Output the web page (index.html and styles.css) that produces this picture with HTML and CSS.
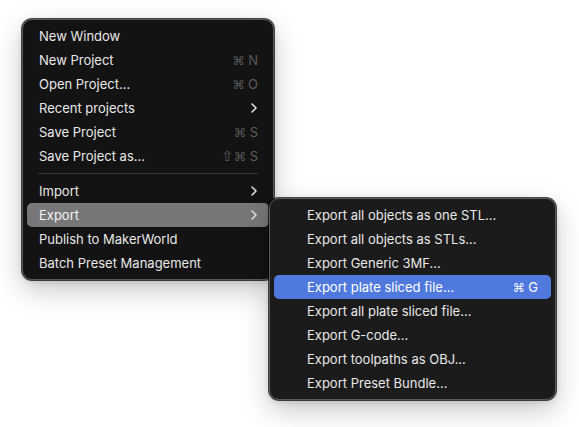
FILE: index.html
```html
<!DOCTYPE html>
<html>
<head>
<meta charset="utf-8">
<link rel="stylesheet" href="styles.css">
</head>
<body>
<div class="stage">
  <div class="menu main">
    <div class="row"><span class="label">New Window</span></div>
    <div class="row"><span class="label">New Project</span><span class="key"><span class="g">⌘</span> N</span></div>
    <div class="row"><span class="label">Open Project...</span><span class="key"><span class="g">⌘</span> O</span></div>
    <div class="row"><span class="label">Recent projects</span><svg class="chev" width="6" height="10" viewBox="0 0 6 10"><path d="M1 1 L5 5 L1 9" fill="none" stroke="currentColor" stroke-width="1.6" stroke-linecap="round" stroke-linejoin="round"/></svg></div>
    <div class="row"><span class="label">Save Project</span><span class="key"><span class="g">⌘</span> S</span></div>
    <div class="row"><span class="label">Save Project as...</span><span class="key"><span class="g shift">⇧</span><span class="g">⌘</span> S</span></div>
    <div class="sep"></div>
    <div class="row"><span class="label">Import</span><svg class="chev" width="6" height="10" viewBox="0 0 6 10"><path d="M1 1 L5 5 L1 9" fill="none" stroke="currentColor" stroke-width="1.6" stroke-linecap="round" stroke-linejoin="round"/></svg></div>
    <div class="row open"><span class="label">Export</span><svg class="chev" width="6" height="10" viewBox="0 0 6 10"><path d="M1 1 L5 5 L1 9" fill="none" stroke="currentColor" stroke-width="1.6" stroke-linecap="round" stroke-linejoin="round"/></svg></div>
    <div class="row"><span class="label">Publish to MakerWorld</span></div>
    <div class="row"><span class="label">Batch Preset Management</span></div>
  </div>
  <div class="menu sub">
    <div class="row"><span class="label">Export all objects as one STL...</span></div>
    <div class="row"><span class="label">Export all objects as STLs...</span></div>
    <div class="row"><span class="label">Export Generic 3MF...</span></div>
    <div class="row active"><span class="label">Export plate sliced file...</span><span class="key"><span class="g">⌘</span> G</span></div>
    <div class="row"><span class="label">Export all plate sliced file...</span></div>
    <div class="row"><span class="label">Export G-code...</span></div>
    <div class="row"><span class="label">Export toolpaths as OBJ...</span></div>
    <div class="row"><span class="label">Export Preset Bundle...</span></div>
  </div>
</div>
</body>
</html>
```
FILE: styles.css
```css
html, body {
  margin: 0;
  padding: 0;
  background: #ffffff;
}
body {
  font-family: Inter, "Liberation Sans", sans-serif;
  font-size: 13px;
  color: #e8e8e8;
  -webkit-font-smoothing: antialiased;
}
.stage {
  position: relative;
  width: 579px;
  height: 427px;
  overflow: hidden;
}
.menu {
  box-sizing: border-box;
  padding: 4px;
  border: 1px solid #5a5a5a;
  border-radius: 10px;
  box-shadow: 0 0 0 1px rgba(0, 0, 0, 0.7), 0 10px 28px rgba(0, 0, 0, 0.22), 0 2px 6px rgba(0, 0, 0, 0.12);
  display: flex;
  flex-direction: column;
}
.main {
  margin: 19px 0 0 22px;
  width: 252px;
  background: #131313;
}
.sub {
  position: absolute;
  left: 269px;
  top: 198px;
  width: 287px;
  background: #1b1b1b;
}
.row {
  height: 24px;
  display: flex;
  align-items: center;
  justify-content: space-between;
  padding: 0 11px 0 12px;
  border-radius: 5px;
  white-space: nowrap;
}
.sub .row {
  padding: 0 13px 0 33px;
}
.key {
  color: #5c5c5c;
  font-size: 13px;
}
.key .g {
  font-family: "DejaVu Sans", sans-serif;
  font-size: 12px;
}
.key .g.shift {
  font-size: 14px;
  margin-right: 1px;
}
.chev {
  color: #dcdcdc;
  margin-right: 1px;
}
.row.open {
  background: #77777a;
  color: #f2f2f2;
}
.row.active {
  background: #5079de;
  color: #ffffff;
}
.row.active .key {
  color: #ffffff;
}
.sep {
  height: 1px;
  background: #363636;
  margin: 5px 11px;
}
```
